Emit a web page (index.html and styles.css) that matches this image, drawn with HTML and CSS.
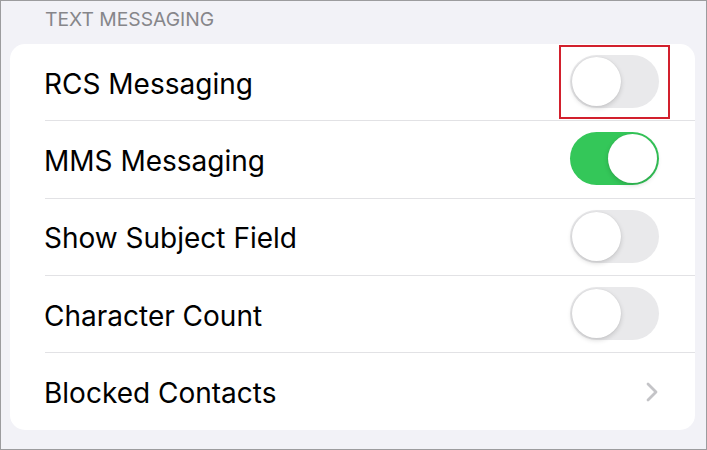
FILE: index.html
```html
<!DOCTYPE html>
<html>
<head>
<meta charset="utf-8">
<link rel="stylesheet" href="styles.css">
</head>
<body>
<div class="screen">
  <div class="section-header">TEXT MESSAGING</div>
  <div class="card">
    <div class="row">
      <span class="label">RCS Messaging</span>
      <span class="toggle"><span class="knob"></span></span>
      <span class="highlight"></span>
    </div>
    <div class="row">
      <span class="label">MMS Messaging</span>
      <span class="toggle on"><span class="knob"></span></span>
    </div>
    <div class="row">
      <span class="label">Show Subject Field</span>
      <span class="toggle"><span class="knob"></span></span>
    </div>
    <div class="row">
      <span class="label">Character Count</span>
      <span class="toggle"><span class="knob"></span></span>
    </div>
    <div class="row last">
      <span class="label">Blocked Contacts</span>
      <svg class="chevron" width="14" height="22" viewBox="0 0 14 22"><path d="M3 3 L11 11 L3 19" fill="none" stroke="#c4c4c7" stroke-width="2.8" stroke-linecap="round" stroke-linejoin="round"/></svg>
    </div>
  </div>
</div>
</body>
</html>
```
FILE: styles.css
```css
html, body {
  margin: 0;
  padding: 0;
}
body {
  font-family: Inter, "Liberation Sans", sans-serif;
  background: #f2f2f7;
}
.screen {
  box-sizing: border-box;
  width: 707px;
  height: 450px;
  border: 1px solid #9c9c9e;
  background: #f2f2f7;
  padding: 0 11px 0 9px;
  overflow: hidden;
}
.section-header {
  font-size: 19.3px;
  color: #86868a;
  padding: 6px 0 0 35px;
  height: 38px;
  box-sizing: border-box;
}
.card {
  background: #ffffff;
  border-radius: 15px;
  margin-top: 5px;
}
.row {
  position: relative;
  height: 77.3px;
  display: flex;
  align-items: center;
  justify-content: space-between;
  padding: 0 36px 0 34px;
  box-sizing: border-box;
}
.row::after {
  content: "";
  position: absolute;
  left: 35px;
  right: 0;
  bottom: 0;
  height: 1px;
  background: #e2e2e5;
}
.row.last::after {
  display: none;
}
.label {
  font-size: 28px;
  color: #000000;
  padding-top: 2px;
}
.toggle {
  position: relative;
  width: 89px;
  height: 53px;
  border-radius: 27px;
  background: #e9e9eb;
  box-sizing: border-box;
  flex: none;
  margin-top: -2px;
}
.toggle .knob {
  position: absolute;
  top: 2px;
  left: 2px;
  width: 49px;
  height: 49px;
  border-radius: 50%;
  background: #ffffff;
  box-shadow: 0 2px 5px rgba(0,0,0,0.16), 0 0 1px rgba(0,0,0,0.12);
}
.toggle.on {
  background: #34c759;
}
.toggle.on .knob {
  left: auto;
  right: 2px;
}
.chevron {
  flex: none;
}
.highlight {
  position: absolute;
  left: 549px;
  top: 1px;
  width: 111px;
  height: 74px;
  border: 2px solid #d2202d;
  box-sizing: border-box;
}
```
